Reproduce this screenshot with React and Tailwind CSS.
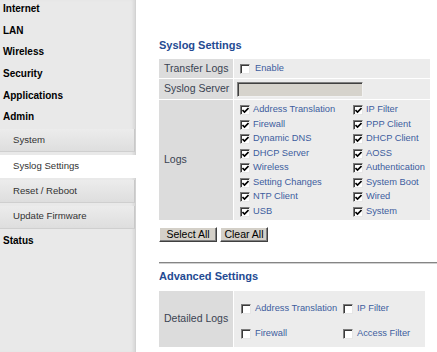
import React from 'react';

const topItems = ['Internet', 'LAN', 'Wireless', 'Security', 'Applications', 'Admin'];
const subItems = ['System', 'Syslog Settings', 'Reset / Reboot', 'Update Firmware'];

const logItems = [
  ['Address Translation', 'IP Filter'],
  ['Firewall', 'PPP Client'],
  ['Dynamic DNS', 'DHCP Client'],
  ['DHCP Server', 'AOSS'],
  ['Wireless', 'Authentication'],
  ['Setting Changes', 'System Boot'],
  ['NTP Client', 'Wired'],
  ['USB', 'System'],
];

// old style windows checkbox
const Box = ({ checked }) => (
  <span className="relative inline-block w-[10px] h-[10px] shrink-0 bg-white border border-t-[#7c7c7c] border-l-[#7c7c7c] border-b-[#e6e6e6] border-r-[#e6e6e6] shadow-[inset_1px_1px_0_#3a3a3a]">
    {checked && (
      <svg className="absolute left-[1px] top-[1px]" width="7" height="7" viewBox="0 0 7 7">
        <path d="M0.5 3 L2.5 5 L6.5 1" fill="none" stroke="#000" strokeWidth="1.6" />
      </svg>
    )}
  </span>
);

const Check = ({ label, checked, w, gap }) => (
  <div className={`flex items-center ${gap || 'gap-[3px]'} ${w || ''}`}>
    <Box checked={checked} />
    <span className="text-[9.3px] text-[#3d5d9e] leading-none">{label}</span>
  </div>
);

const Sidebar = () => (
  <div className="w-[136px] shrink-0 bg-[#e9e9e9] border-r border-r-[#d2d2d2] shadow-[inset_-3px_0_3px_-1px_#d8d8d8] min-h-[352px] font-['Liberation_Sans',Arial,sans-serif]">
    <div className="-mt-[2.5px]">
      {topItems.map((t) => (
        <div key={t} className="h-[21.7px] flex items-center pl-[3px] text-[10px] font-bold text-black">
          {t}
        </div>
      ))}
    </div>
    <div className="mt-[1.5px] flex flex-col gap-[2.5px]">
      {subItems.map((t) => (
        <div
          key={t}
          className={`h-[23px] flex items-center pl-[13px] text-[9.6px] text-[#333] ${
            t === 'Syslog Settings'
              ? 'bg-white -mr-[1px]'
              : 'bg-gradient-to-b from-[#ececec] to-[#dedede] border-b border-r border-b-[#cfcfcf] border-r-[#c8c8c8]'
          }`}
        >
          {t}
        </div>
      ))}
    </div>
    <div className="h-[22px] mt-[0.5px] flex items-center pl-[3px] text-[10px] font-bold text-black">Status</div>
  </div>
);

const Label = ({ children }) => (
  <div className="bg-[#dcdcdc] flex items-center pl-[5px] text-[10.5px] text-[#3a4352]">{children}</div>
);

const App = () => {
  return (
    <div className="flex w-[437px] h-[352px] overflow-hidden bg-white font-['Liberation_Sans',Arial,sans-serif]">
      <Sidebar />
      <div className="flex-1 pl-[23px] pt-[39px]">
        <h2 className="text-[11px] leading-[13px] font-bold text-[#244a92]">Syslog Settings</h2>

        <div className="mt-[7px] w-[271px] grid grid-cols-[74px_1fr] grid-rows-[19px_20px_120px] gap-[1px] bg-white">
          <Label>Transfer Logs</Label>
          <div className="bg-[#ececec] flex items-center pl-[6px]">
            <Check label="Enable" gap="gap-[5px]" />
          </div>
          <Label>Syslog Server</Label>
          <div className="bg-[#ececec] flex items-center pl-[3px]">
            <div className="w-[126px] h-[15px] bg-[#d6d3cc] border border-t-[#808080] border-l-[#808080] border-b-[#f2f2f2] border-r-[#f2f2f2] shadow-[inset_1px_1px_0_#404040]" />
          </div>
          <Label>Logs</Label>
          <div className="bg-[#ececec] pl-[6px] pt-[2.75px]">
            {logItems.map(([a, b]) => (
              <div key={a} className="h-[14.5px] flex items-center">
                <Check label={a} checked w="w-[113px]" />
                <Check label={b} checked />
              </div>
            ))}
          </div>
        </div>

        <div className="mt-[7px] flex gap-[3px]">
          <button className="w-[58px] h-[15px] bg-[#d4d0c8] border border-t-white border-l-white border-b-[#404040] border-r-[#404040] shadow-[inset_-1px_-1px_0_#808080] text-[10.5px] leading-none text-black">
            Select All
          </button>
          <button className="w-[48px] h-[15px] bg-[#d4d0c8] border border-t-white border-l-white border-b-[#404040] border-r-[#404040] shadow-[inset_-1px_-1px_0_#808080] text-[10.5px] leading-none text-black">
            Clear All
          </button>
        </div>

        <div className="mt-[20px] h-[2px] border-t border-t-[#858585] border-b border-b-[#d0d0d0]" />

        <h2 className="mt-[6px] text-[11px] leading-[13px] font-bold text-[#244a92]">Advanced Settings</h2>

        <div className="mt-[8px] w-[266px] grid grid-cols-[74px_1fr] h-[56px] gap-[1px] bg-white">
          <Label>Detailed Logs</Label>
          <div className="bg-[#ececec] pl-[7px] pt-[5px]">
            <div className="h-[25px] flex items-center">
              <Check label="Address Translation" w="w-[102px]" gap="gap-[4px]" />
              <Check label="IP Filter" gap="gap-[4px]" />
            </div>
            <div className="h-[25px] flex items-center">
              <Check label="Firewall" w="w-[102px]" gap="gap-[4px]" />
              <Check label="Access Filter" gap="gap-[4px]" />
            </div>
          </div>
        </div>
      </div>
    </div>
  );
};

export default App;
